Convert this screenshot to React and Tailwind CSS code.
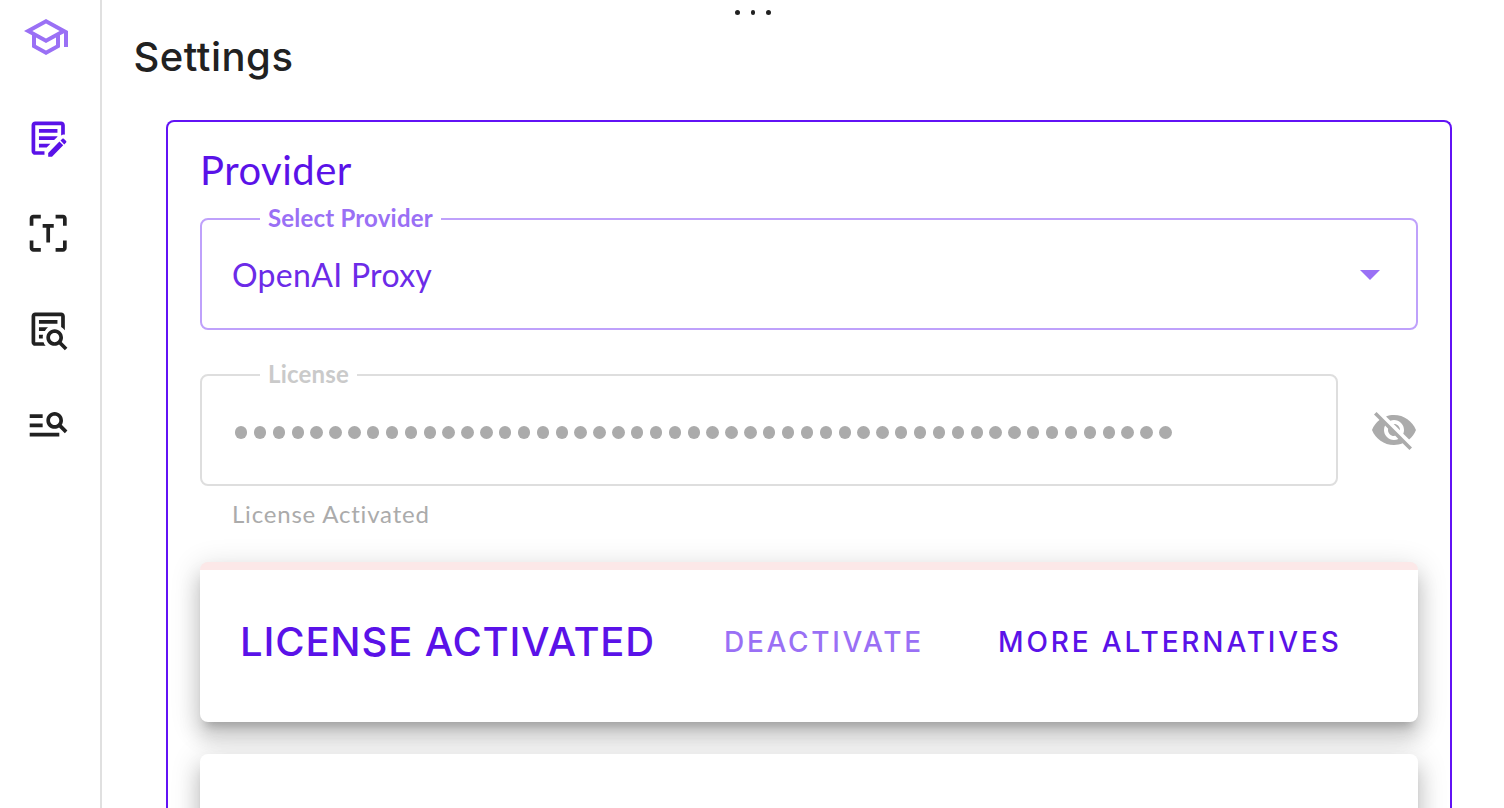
const magnifier =
  'M15.5 12C18 12 20 14 20 16.5C20 17.38 19.75 18.21 19.31 18.9L22.39 22L21 23.39L17.88 20.32C17.19 20.75 16.37 21 15.5 21C13 21 11 19 11 16.5C11 14 13 12 15.5 12M15.5 14C14.12 14 13 15.12 13 16.5C13 17.88 14.12 19 15.5 19C16.88 19 18 17.88 18 16.5C18 15.12 16.88 14 15.5 14';

function Icon({ className, children }) {
  return (
    <svg viewBox="0 0 24 24" fill="currentColor" className={className}>
      {children}
    </svg>
  );
}

function Sidebar() {
  return (
    <nav className="flex w-[102px] shrink-0 flex-col border-r-2 border-[#e0e0e0] text-[#212121]">
      <Icon className="mt-[13px] ml-[22px] size-12 shrink-0 text-[#9a70f5]">
        <path d="M12 3 1 9l4 2.18v6L12 21l7-3.82v-6l2-1.09V17h2V9L12 3zm6.82 6L12 12.72 5.18 9 12 5.28 18.82 9zM17 15.99l-5 2.73-5-2.73v-3.72L12 15l5-2.73v3.72z" />
      </Icon>
      <Icon className="mt-[54.5px] ml-[26px] size-[44.4px] shrink-0 text-[#5a12e8]">
        <path d="M10 21H5C3.89 21 3 20.11 3 19V5C3 3.89 3.89 3 5 3H19C20.11 3 21 3.89 21 5V10.1C20.3 9.95 19.6 10.1 19 10.5V5H5V19H10V21M17 7H7V9H17V7M17 11H7V13H15.2L17 11.2V11M13.2 15H7V17H11.2L13.2 15" />
        <path d="M21.7 14.35L20.7 15.35L18.65 13.3L19.65 12.3C19.86 12.09 20.21 12.09 20.42 12.3L21.7 13.58C21.91 13.79 21.91 14.14 21.7 14.35M12 19.94V22H14.06L20.12 15.88L18.07 13.83L12 19.94Z" />
      </Icon>
      <Icon className="mt-[51.1px] ml-[26px] size-[44.4px] shrink-0">
        <path d="M4 2H8V4H4V8H2V4C2 2.9 2.9 2 4 2M16 2H20C21.1 2 22 2.9 22 4V8H20V4H16V2M2 16H4V20H8V22H4C2.9 22 2 21.1 2 20V16M20 16H22V20C22 21.1 21.1 22 20 22H16V20H20V16M9 7H15V9H13V17H11V9H9V7" />
      </Icon>
      <Icon className="mt-[52px] ml-[26px] size-[44.4px] shrink-0">
        <path d="M5 3H19C20.1 3 21 3.9 21 5V12.6C20.5 11.8 19.8 11.2 19 10.8V5H5V19H9.5C9.7 19.7 10.1 20.4 10.6 21H5C3.9 21 3 20.1 3 19V5C3 3.9 3.9 3 5 3M7 7H17V9H7V7M7 11H11.9C11.2 11.5 10.6 12.2 10.2 13H7V11M7 15H9.2C9.05 15.6 9 16.3 9.1 17H7V15" />
        <path d={magnifier} />
      </Icon>
      <Icon className="mt-[49px] ml-[26px] size-[44.4px] shrink-0">
        <path d="M2 7.2H9V9.2H2V7.2M2 12.2H9V14.2H2V12.2M2 17.2H18V19.2H2V17.2" />
        <path d={magnifier} transform="translate(0 -6)" />
      </Icon>
    </nav>
  );
}

function MoreDots() {
  return (
    <div className="mt-[10px] ml-[633px] flex gap-[11px]">
      {[0, 1, 2].map((i) => (
        <span key={i} className="size-[4.6px] rounded-full bg-[#212121]" />
      ))}
    </div>
  );
}

function LicenseField() {
  return (
    <div className="mt-8 flex items-center">
      <fieldset className="h-[124px] w-[1138px] rounded-lg border-2 border-[#dedede] pl-[33px]">
        <legend className="ml-[25px] h-[26px] px-2 text-2xl leading-6 font-bold tracking-[0.2px] text-[#cacaca]">License</legend>
        <div className="mt-[38.5px] flex w-[937px] justify-between">
          {Array.from({ length: 50 }, (_, i) => (
            <span key={i} className="size-[12.4px] rounded-full bg-[#ababab]" />
          ))}
        </div>
      </fieldset>
      <Icon className="mt-3 ml-8 size-12 text-[#ababab]">
        <path d="M12 7c2.76 0 5 2.24 5 5 0 .65-.13 1.26-.36 1.83l2.92 2.92c1.51-1.26 2.7-2.89 3.43-4.75-1.73-4.39-6-7.5-11-7.5-1.4 0-2.74.25-3.98.7l2.16 2.16C10.74 7.13 11.35 7 12 7zM2 4.27l2.28 2.28.46.46C3.08 8.3 1.78 10.02 1 12c1.73 4.39 6 7.5 11 7.5 1.55 0 3.03-.3 4.38-.84l.42.42L19.73 22 21 20.73 3.27 3 2 4.27zM7.53 9.8l1.55 1.55c-.05.21-.08.43-.08.65 0 1.66 1.34 3 3 3 .22 0 .44-.03.65-.08l1.55 1.55c-.67.33-1.41.53-2.2.53-2.76 0-5-2.24-5-5 0-.79.2-1.53.53-2.2zm4.31-.78 3.15 3.15.02-.16c0-1.66-1.34-3-3-3l-.17.01z" />
      </Icon>
    </div>
  );
}

const elevation =
  'shadow-[0_10px_10px_-6px_rgba(0,0,0,0.2),0_16px_20px_2px_rgba(0,0,0,0.14),0_6px_28px_4px_rgba(0,0,0,0.12)]';

export default function App() {
  return (
    <div className="flex h-[808px] w-[1504px] overflow-hidden bg-white font-['Inter',sans-serif]">
      <Sidebar />
      <main className="flex min-w-0 flex-1 flex-col">
        <MoreDots />
        <h1 className="mt-[17.4px] ml-[31.5px] h-[50px] text-[40px] leading-[50px] font-medium tracking-[0.5px] text-[#212121]">Settings</h1>
        <section className="mt-[38px] ml-16 w-[1286px] flex-1 rounded-t-lg border-2 border-b-0 border-[#6213f5] px-8 font-['Lato',sans-serif]">
          <h2 className="mt-[23px] h-[50px] text-[40px] leading-[50px] tracking-[0.5px] text-[#5a12e8]">Provider</h2>
          <fieldset className="mt-[11px] h-[124px] rounded-lg border-2 border-[#bfa1fb] pr-9 pl-[30px]">
            <legend className="ml-7 h-[26px] px-2 text-2xl leading-6 font-bold tracking-[0.2px] text-[#9a70f5]">Select Provider</legend>
            <div className="mt-[23px] flex h-10 items-center justify-between">
              <span className="text-[32px] leading-10 tracking-[0.3px] text-[#6c2be8]">OpenAI Proxy</span>
              <svg viewBox="0 0 20 10" className="h-[10px] w-5 fill-[#9a70f5]">
                <path d="M0 0h20L10 10z" />
              </svg>
            </div>
          </fieldset>
          <LicenseField />
          <p className="mt-[13px] ml-8 h-[31px] text-2xl leading-[30px] tracking-[0.8px] text-[#ababab]">License Activated</p>
          <div className={`mt-8 flex h-40 items-center rounded-lg border-t-8 border-[#fce8e8] bg-white font-['Inter',sans-serif] ${elevation}`}>
            <span className="-mt-2 ml-10 w-[484px] text-[40px] font-medium tracking-[0.85px] text-[#5a12e8]">LICENSE ACTIVATED</span>
            <button className="-mt-2 w-[274px] text-left text-[28px] font-medium tracking-[2.7px] text-[#9a70f5]">DEACTIVATE</button>
            <button className="-mt-2 text-[28px] font-medium tracking-[2.85px] whitespace-nowrap text-[#5a12e8]">MORE ALTERNATIVES</button>
          </div>
          <div className={`mt-8 h-40 rounded-lg bg-white ${elevation}`} />
        </section>
      </main>
    </div>
  );
}
